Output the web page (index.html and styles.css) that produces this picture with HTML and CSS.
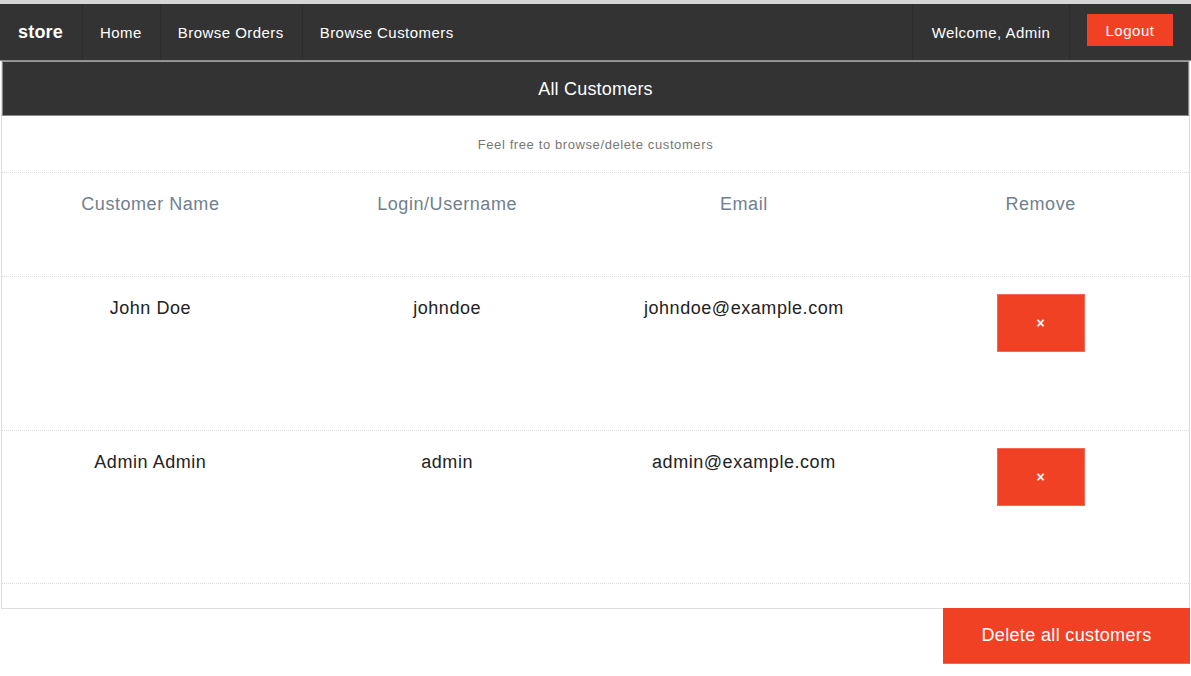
FILE: index.html
```html
<!DOCTYPE html>
<html>
<head>
<meta charset="utf-8">
<link rel="stylesheet" href="styles.css">
</head>
<body>
<div class="topstrip"></div>
<nav class="navbar">
  <div class="nav-left">
    <a class="brand">store</a>
    <a class="nav-link">Home</a>
    <a class="nav-link">Browse Orders</a>
    <a class="nav-link">Browse Customers</a>
  </div>
  <div class="nav-right">
    <span class="welcome">Welcome, Admin</span>
    <a class="logout">Logout</a>
  </div>
</nav>
<main class="panel">
  <div class="panel-head">All Customers</div>
  <div class="panel-sub">Feel free to browse/delete customers</div>
  <div class="row head-row">
    <div class="cell">Customer Name</div>
    <div class="cell">Login/Username</div>
    <div class="cell">Email</div>
    <div class="cell">Remove</div>
  </div>
  <div class="row data-row">
    <div class="cell">John Doe</div>
    <div class="cell">johndoe</div>
    <div class="cell">johndoe@example.com</div>
    <div class="cell"><button class="remove">×</button></div>
  </div>
  <div class="row data-row data-row-last">
    <div class="cell">Admin Admin</div>
    <div class="cell">admin</div>
    <div class="cell">admin@example.com</div>
    <div class="cell"><button class="remove">×</button></div>
  </div>
  <div class="panel-foot"></div>
</main>
<div class="actions">
  <button class="delete-all">Delete all customers</button>
</div>
</body>
</html>
```

FILE: styles.css
```css
* { box-sizing: border-box; }
body {
  margin: 0;
  font-family: "Liberation Sans", Arial, Helvetica, sans-serif;
  background: #fff;
  color: #222;
  letter-spacing: 0.55px;
}
.topstrip {
  height: 4px;
  background: #d6d6d6;
}
.navbar {
  height: 57px;
  background: #333;
  border-bottom: 1px solid #8c8c8c;
  display: flex;
  justify-content: space-between;
  align-items: stretch;
}
.nav-left, .nav-right {
  display: flex;
  align-items: stretch;
}
.brand {
  display: flex;
  align-items: center;
  padding: 0 19px 0 18px;
  color: #fff;
  font-size: 18px;
  font-weight: bold;
  letter-spacing: 0.2px;
}
.nav-link {
  display: flex;
  align-items: center;
  padding: 0 18px 0 17px;
  color: #fff;
  font-size: 15px;
  border-left: 1px solid #2c2c2c;
  letter-spacing: 0.45px;
}
.welcome {
  display: flex;
  align-items: center;
  padding: 0 10px;
  color: #fff;
  font-size: 15px;
  border-left: 1px solid #2c2c2c;
  border-right: 1px solid #2c2c2c;
  width: 158px;
  justify-content: center;
  letter-spacing: 0.45px;
}
.logout {
  align-self: flex-start;
  margin: 10px 18px 0 17px;
  width: 86px;
  height: 32px;
  background: #f04124;
  color: #fff;
  font-size: 15px;
  display: flex;
  align-items: center;
  justify-content: center;
}
.panel {
  margin: 0 1px;
  border: 1px solid #ddd;
  border-top: none;
}
.panel-head {
  height: 55px;
  padding-top: 2px;
  background: #333;
  border: 1px solid #888;
  border-top-color: #999;
  color: #fff;
  font-size: 18px;
  display: flex;
  align-items: center;
  justify-content: center;
  letter-spacing: 0.2px;
}
.panel-sub {
  height: 57px;
  display: flex;
  align-items: center;
  justify-content: center;
  font-size: 13px;
  color: #777;
  border-bottom: 1px dotted #ddd;
  letter-spacing: 0.6px;
}
.row {
  display: grid;
  grid-template-columns: repeat(4, 1fr);
  border-bottom: 1px dotted #ddd;
}
.head-row { height: 104px; }
.data-row { height: 154px; }
.data-row-last { height: 153px; }
.cell {
  text-align: center;
  font-size: 18px;
  line-height: 26px;
  padding-top: 18px;
}
.head-row .cell { color: #708090; }
.data-row .cell { color: #222; }
.remove {
  width: 88px;
  height: 58px;
  margin-top: -1px;
  background: #f04124;
  border: 1px solid #f26a55;
  color: #fff;
  font-family: "Liberation Sans", Arial, sans-serif;
  font-size: 14px;
  font-weight: bold;
  padding: 0;
  cursor: pointer;
}
.panel-foot { height: 24px; }
.actions {
  display: flex;
  justify-content: flex-end;
  padding-right: 1px;
}
.delete-all {
  width: 247px;
  height: 56px;
  margin-top: -1px;
  background: #f04124;
  border: none;
  border-bottom: 1px solid #f26a55;
  color: #fff;
  font-family: "Liberation Sans", Arial, sans-serif;
  font-size: 18px;
  letter-spacing: 0.35px;
  padding: 0;
}
```
